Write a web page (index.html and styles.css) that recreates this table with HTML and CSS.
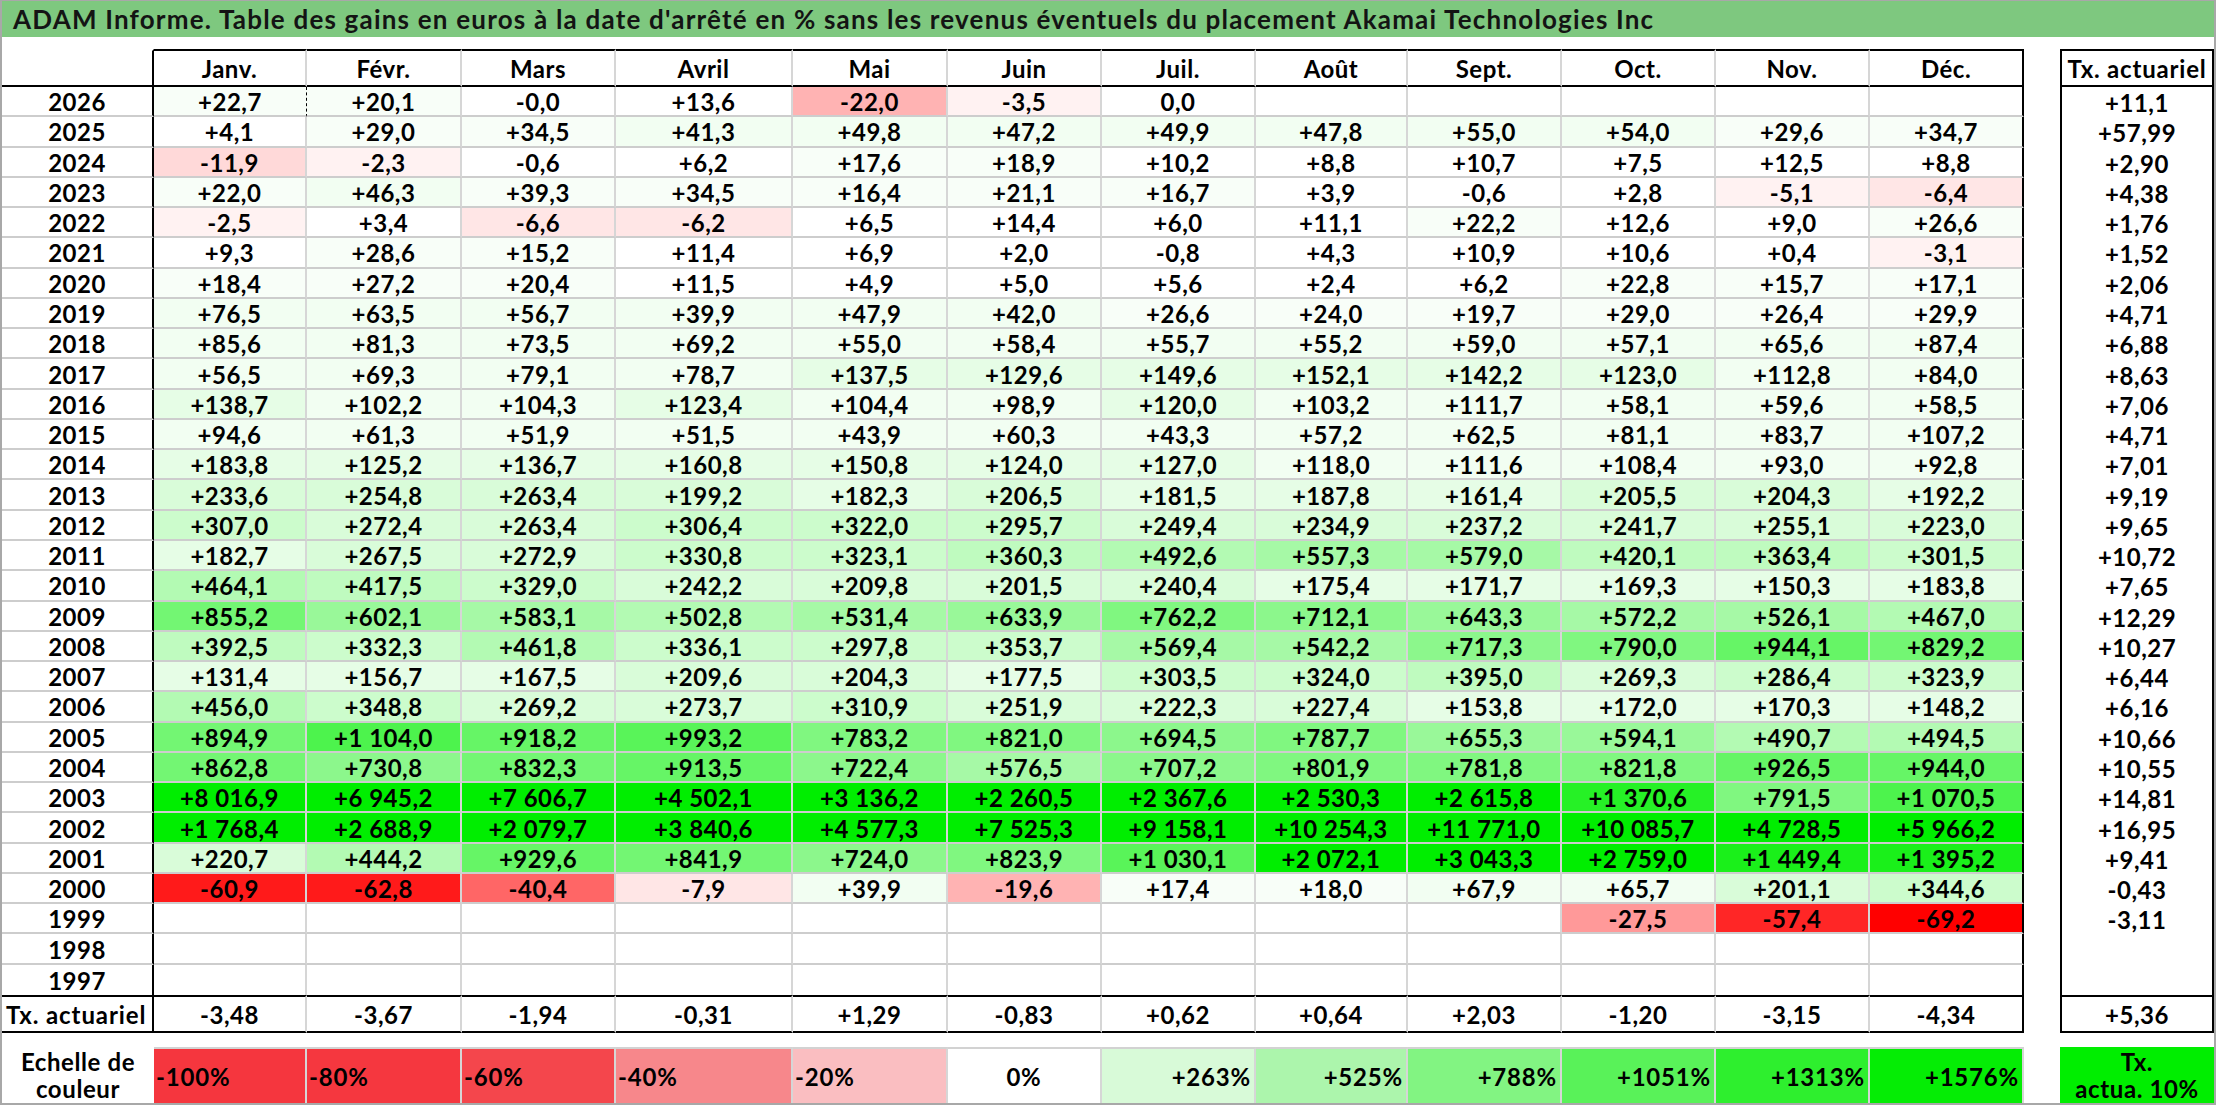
FILE: index.html
```html
<!DOCTYPE html>
<html lang="fr">
<head>
<meta charset="utf-8">
<title>ADAM Informe</title>
<link rel="stylesheet" href="styles.css">
</head>
<body>
<div class="sheet">
  <div class="title">ADAM Informe. Table des gains en euros à la date d'arrêté en % sans les revenus éventuels du placement Akamai Technologies Inc</div>
  <div class="tables">
    <div class="grid">
      <div class="y hd corner"></div>
      <div class="c hd">Janv.</div><div class="c hd">Févr.</div><div class="c hd">Mars</div><div class="c hd">Avril</div><div class="c hd">Mai</div><div class="c hd">Juin</div><div class="c hd">Juil.</div><div class="c hd">Août</div><div class="c hd">Sept.</div><div class="c hd">Oct.</div><div class="c hd">Nov.</div><div class="c hd e">Déc.</div>

      <div class="y">2026</div>
      <div class="c gh mq">+22,7</div><div class="c gh">+20,1</div><div class="c">-0,0</div><div class="c">+13,6</div><div class="c r6">-22,0</div><div class="c r1">-3,5</div><div class="c">0,0</div><div class="c"></div><div class="c"></div><div class="c"></div><div class="c"></div><div class="c e"></div>

      <div class="y">2025</div>
      <div class="c">+4,1</div><div class="c gh">+29,0</div><div class="c gh">+34,5</div><div class="c g1">+41,3</div><div class="c g1">+49,8</div><div class="c g1">+47,2</div><div class="c g1">+49,9</div><div class="c g1">+47,8</div><div class="c g1">+55,0</div><div class="c g1">+54,0</div><div class="c gh">+29,6</div><div class="c gh e">+34,7</div>

      <div class="y">2024</div>
      <div class="c r3">-11,9</div><div class="c r1">-2,3</div><div class="c">-0,6</div><div class="c">+6,2</div><div class="c gh">+17,6</div><div class="c gh">+18,9</div><div class="c">+10,2</div><div class="c">+8,8</div><div class="c">+10,7</div><div class="c">+7,5</div><div class="c">+12,5</div><div class="c e">+8,8</div>

      <div class="y">2023</div>
      <div class="c gh">+22,0</div><div class="c g1">+46,3</div><div class="c gh">+39,3</div><div class="c gh">+34,5</div><div class="c gh">+16,4</div><div class="c gh">+21,1</div><div class="c gh">+16,7</div><div class="c">+3,9</div><div class="c">-0,6</div><div class="c">+2,8</div><div class="c r1">-5,1</div><div class="c r2 e">-6,4</div>

      <div class="y">2022</div>
      <div class="c r1">-2,5</div><div class="c">+3,4</div><div class="c r2">-6,6</div><div class="c r2">-6,2</div><div class="c">+6,5</div><div class="c">+14,4</div><div class="c">+6,0</div><div class="c">+11,1</div><div class="c gh">+22,2</div><div class="c">+12,6</div><div class="c">+9,0</div><div class="c gh e">+26,6</div>

      <div class="y">2021</div>
      <div class="c">+9,3</div><div class="c gh">+28,6</div><div class="c gh">+15,2</div><div class="c">+11,4</div><div class="c">+6,9</div><div class="c">+2,0</div><div class="c">-0,8</div><div class="c">+4,3</div><div class="c">+10,9</div><div class="c">+10,6</div><div class="c">+0,4</div><div class="c r1 e">-3,1</div>

      <div class="y">2020</div>
      <div class="c gh">+18,4</div><div class="c gh">+27,2</div><div class="c gh">+20,4</div><div class="c">+11,5</div><div class="c">+4,9</div><div class="c">+5,0</div><div class="c">+5,6</div><div class="c">+2,4</div><div class="c">+6,2</div><div class="c gh">+22,8</div><div class="c gh">+15,7</div><div class="c gh e">+17,1</div>

      <div class="y">2019</div>
      <div class="c g1">+76,5</div><div class="c g1">+63,5</div><div class="c g1">+56,7</div><div class="c g1">+39,9</div><div class="c g1">+47,9</div><div class="c g1">+42,0</div><div class="c gh">+26,6</div><div class="c gh">+24,0</div><div class="c gh">+19,7</div><div class="c gh">+29,0</div><div class="c gh">+26,4</div><div class="c gh e">+29,9</div>

      <div class="y">2018</div>
      <div class="c g1">+85,6</div><div class="c g1">+81,3</div><div class="c g1">+73,5</div><div class="c g1">+69,2</div><div class="c g1">+55,0</div><div class="c g1">+58,4</div><div class="c g1">+55,7</div><div class="c g1">+55,2</div><div class="c g1">+59,0</div><div class="c g1">+57,1</div><div class="c g1">+65,6</div><div class="c g1 e">+87,4</div>

      <div class="y">2017</div>
      <div class="c g1">+56,5</div><div class="c g1">+69,3</div><div class="c g1">+79,1</div><div class="c g1">+78,7</div><div class="c g2">+137,5</div><div class="c g2">+129,6</div><div class="c g2">+149,6</div><div class="c g2">+152,1</div><div class="c g2">+142,2</div><div class="c g2">+123,0</div><div class="c g1">+112,8</div><div class="c g1 e">+84,0</div>

      <div class="y">2016</div>
      <div class="c g2">+138,7</div><div class="c g1">+102,2</div><div class="c g1">+104,3</div><div class="c g2">+123,4</div><div class="c g1">+104,4</div><div class="c g1">+98,9</div><div class="c g2">+120,0</div><div class="c g1">+103,2</div><div class="c g1">+111,7</div><div class="c g1">+58,1</div><div class="c g1">+59,6</div><div class="c g1 e">+58,5</div>

      <div class="y">2015</div>
      <div class="c g1">+94,6</div><div class="c g1">+61,3</div><div class="c g1">+51,9</div><div class="c g1">+51,5</div><div class="c g1">+43,9</div><div class="c g1">+60,3</div><div class="c g1">+43,3</div><div class="c g1">+57,2</div><div class="c g1">+62,5</div><div class="c g1">+81,1</div><div class="c g1">+83,7</div><div class="c g1 e">+107,2</div>

      <div class="y">2014</div>
      <div class="c g2">+183,8</div><div class="c g2">+125,2</div><div class="c g2">+136,7</div><div class="c g2">+160,8</div><div class="c g2">+150,8</div><div class="c g2">+124,0</div><div class="c g2">+127,0</div><div class="c g1">+118,0</div><div class="c g1">+111,6</div><div class="c g1">+108,4</div><div class="c g1">+93,0</div><div class="c g1 e">+92,8</div>

      <div class="y">2013</div>
      <div class="c g3">+233,6</div><div class="c g3">+254,8</div><div class="c g3">+263,4</div><div class="c g3">+199,2</div><div class="c g2">+182,3</div><div class="c g3">+206,5</div><div class="c g2">+181,5</div><div class="c g2">+187,8</div><div class="c g2">+161,4</div><div class="c g3">+205,5</div><div class="c g3">+204,3</div><div class="c g2 e">+192,2</div>

      <div class="y">2012</div>
      <div class="c g4">+307,0</div><div class="c g3">+272,4</div><div class="c g3">+263,4</div><div class="c g4">+306,4</div><div class="c g4">+322,0</div><div class="c g4">+295,7</div><div class="c g3">+249,4</div><div class="c g3">+234,9</div><div class="c g3">+237,2</div><div class="c g3">+241,7</div><div class="c g3">+255,1</div><div class="c g3 e">+223,0</div>

      <div class="y">2011</div>
      <div class="c g2">+182,7</div><div class="c g3">+267,5</div><div class="c g3">+272,9</div><div class="c g4">+330,8</div><div class="c g4">+323,1</div><div class="c g5">+360,3</div><div class="c g6">+492,6</div><div class="c g7">+557,3</div><div class="c g7">+579,0</div><div class="c g5">+420,1</div><div class="c g5">+363,4</div><div class="c g4 e">+301,5</div>

      <div class="y">2010</div>
      <div class="c g6">+464,1</div><div class="c g5">+417,5</div><div class="c g4">+329,0</div><div class="c g3">+242,2</div><div class="c g3">+209,8</div><div class="c g3">+201,5</div><div class="c g3">+240,4</div><div class="c g2">+175,4</div><div class="c g2">+171,7</div><div class="c g2">+169,3</div><div class="c g2">+150,3</div><div class="c g2 e">+183,8</div>

      <div class="y">2009</div>
      <div class="c g11">+855,2</div><div class="c g8">+602,1</div><div class="c g7">+583,1</div><div class="c g6">+502,8</div><div class="c g7">+531,4</div><div class="c g8">+633,9</div><div class="c g10">+762,2</div><div class="c g9">+712,1</div><div class="c g8">+643,3</div><div class="c g7">+572,2</div><div class="c g7">+526,1</div><div class="c g6 e">+467,0</div>

      <div class="y">2008</div>
      <div class="c g5">+392,5</div><div class="c g4">+332,3</div><div class="c g6">+461,8</div><div class="c g4">+336,1</div><div class="c g4">+297,8</div><div class="c g4">+353,7</div><div class="c g7">+569,4</div><div class="c g7">+542,2</div><div class="c g9">+717,3</div><div class="c g10">+790,0</div><div class="c g12">+944,1</div><div class="c g11 e">+829,2</div>

      <div class="y">2007</div>
      <div class="c g2">+131,4</div><div class="c g2">+156,7</div><div class="c g2">+167,5</div><div class="c g3">+209,6</div><div class="c g3">+204,3</div><div class="c g2">+177,5</div><div class="c g4">+303,5</div><div class="c g4">+324,0</div><div class="c g5">+395,0</div><div class="c g3">+269,3</div><div class="c g4">+286,4</div><div class="c g4 e">+323,9</div>

      <div class="y">2006</div>
      <div class="c g6">+456,0</div><div class="c g4">+348,8</div><div class="c g3">+269,2</div><div class="c g3">+273,7</div><div class="c g4">+310,9</div><div class="c g3">+251,9</div><div class="c g3">+222,3</div><div class="c g3">+227,4</div><div class="c g2">+153,8</div><div class="c g2">+172,0</div><div class="c g2">+170,3</div><div class="c g2 e">+148,2</div>

      <div class="y">2005</div>
      <div class="c g11">+894,9</div><div class="c g14">+1 104,0</div><div class="c g12">+918,2</div><div class="c g13">+993,2</div><div class="c g10">+783,2</div><div class="c g10">+821,0</div><div class="c g9">+694,5</div><div class="c g10">+787,7</div><div class="c g8">+655,3</div><div class="c g8">+594,1</div><div class="c g6">+490,7</div><div class="c g6 e">+494,5</div>

      <div class="y">2004</div>
      <div class="c g11">+862,8</div><div class="c g9">+730,8</div><div class="c g11">+832,3</div><div class="c g12">+913,5</div><div class="c g9">+722,4</div><div class="c g7">+576,5</div><div class="c g9">+707,2</div><div class="c g10">+801,9</div><div class="c g10">+781,8</div><div class="c g10">+821,8</div><div class="c g12">+926,5</div><div class="c g12 e">+944,0</div>

      <div class="y">2003</div>
      <div class="c g20">+8 016,9</div><div class="c g20">+6 945,2</div><div class="c g20">+7 606,7</div><div class="c g20">+4 502,1</div><div class="c g20">+3 136,2</div><div class="c g20">+2 260,5</div><div class="c g20">+2 367,6</div><div class="c g20">+2 530,3</div><div class="c g20">+2 615,8</div><div class="c g17">+1 370,6</div><div class="c g10">+791,5</div><div class="c g14 e">+1 070,5</div>

      <div class="y">2002</div>
      <div class="c g20">+1 768,4</div><div class="c g20">+2 688,9</div><div class="c g20">+2 079,7</div><div class="c g20">+3 840,6</div><div class="c g20">+4 577,3</div><div class="c g20">+7 525,3</div><div class="c g20">+9 158,1</div><div class="c g20">+10 254,3</div><div class="c g20">+11 771,0</div><div class="c g20">+10 085,7</div><div class="c g20">+4 728,5</div><div class="c g20 e">+5 966,2</div>

      <div class="y">2001</div>
      <div class="c g3">+220,7</div><div class="c g6">+444,2</div><div class="c g12">+929,6</div><div class="c g11">+841,9</div><div class="c g9">+724,0</div><div class="c g10">+823,9</div><div class="c g13">+1 030,1</div><div class="c g20">+2 072,1</div><div class="c g20">+3 043,3</div><div class="c g20">+2 759,0</div><div class="c g18">+1 449,4</div><div class="c g18 e">+1 395,2</div>

      <div class="y">2000</div>
      <div class="c r18">-60,9</div><div class="c r18">-62,8</div><div class="c r12">-40,4</div><div class="c r2">-7,9</div><div class="c g1">+39,9</div><div class="c r6">-19,6</div><div class="c gh">+17,4</div><div class="c gh">+18,0</div><div class="c g1">+67,9</div><div class="c g1">+65,7</div><div class="c g3">+201,1</div><div class="c g4 e">+344,6</div>

      <div class="y">1999</div>
      <div class="c"></div><div class="c"></div><div class="c"></div><div class="c"></div><div class="c"></div><div class="c"></div><div class="c"></div><div class="c"></div><div class="c"></div><div class="c r8">-27,5</div><div class="c r17">-57,4</div><div class="c r20 e">-69,2</div>

      <div class="y">1998</div>
      <div class="c"></div><div class="c"></div><div class="c"></div><div class="c"></div><div class="c"></div><div class="c"></div><div class="c"></div><div class="c"></div><div class="c"></div><div class="c"></div><div class="c"></div><div class="c e"></div>

      <div class="y nb">1997</div>
      <div class="c nb"></div><div class="c nb"></div><div class="c nb"></div><div class="c nb"></div><div class="c nb"></div><div class="c nb"></div><div class="c nb"></div><div class="c nb"></div><div class="c nb"></div><div class="c nb"></div><div class="c nb"></div><div class="c nb e"></div>

      <div class="y tx txlabel">Tx. actuariel</div>
      <div class="c tx">-3,48</div><div class="c tx">-3,67</div><div class="c tx">-1,94</div><div class="c tx">-0,31</div><div class="c tx">+1,29</div><div class="c tx">-0,83</div><div class="c tx">+0,62</div><div class="c tx">+0,64</div><div class="c tx">+2,03</div><div class="c tx">-1,20</div><div class="c tx">-3,15</div><div class="c tx e">-4,34</div>
    </div>

    <div class="side">
      <div class="s shd">Tx. actuariel</div>
      <div class="s">+11,1</div>
      <div class="s">+57,99</div>
      <div class="s">+2,90</div>
      <div class="s">+4,38</div>
      <div class="s">+1,76</div>
      <div class="s">+1,52</div>
      <div class="s">+2,06</div>
      <div class="s">+4,71</div>
      <div class="s">+6,88</div>
      <div class="s">+8,63</div>
      <div class="s">+7,06</div>
      <div class="s">+4,71</div>
      <div class="s">+7,01</div>
      <div class="s">+9,19</div>
      <div class="s">+9,65</div>
      <div class="s">+10,72</div>
      <div class="s">+7,65</div>
      <div class="s">+12,29</div>
      <div class="s">+10,27</div>
      <div class="s">+6,44</div>
      <div class="s">+6,16</div>
      <div class="s">+10,66</div>
      <div class="s">+10,55</div>
      <div class="s">+14,81</div>
      <div class="s">+16,95</div>
      <div class="s">+9,41</div>
      <div class="s">-0,43</div>
      <div class="s">-3,11</div>
      <div class="s"></div>
      <div class="s"></div>
      <div class="s stx">+5,36</div>
    </div>
  </div>

  <div class="legend">
    <div class="lgrid">
      <div class="llabel">Echelle de<br>couleur</div>
      <div class="l neg l100">-100%</div>
      <div class="l neg l80">-80%</div>
      <div class="l neg l60">-60%</div>
      <div class="l neg l40">-40%</div>
      <div class="l neg l20">-20%</div>
      <div class="l zero">0%</div>
      <div class="l pos p1">+263%</div>
      <div class="l pos p2">+525%</div>
      <div class="l pos p3">+788%</div>
      <div class="l pos p4">+1051%</div>
      <div class="l pos p5">+1313%</div>
      <div class="l pos p6">+1576%</div>
    </div>
    <div class="ltx">Tx.<br>actua. 10%</div>
  </div>
</div>
</body>
</html>
```

FILE: styles.css
```css
* {
  box-sizing: border-box;
}

html,
body {
  margin: 0;
  padding: 0;
  background: #ffffff;
}

body {
  font-family: "Lato", "Liberation Sans", sans-serif;
  font-weight: 700;
  color: #000000;
}

.sheet {
  width: 2216px;
  height: 1105px;
  border: 2px solid #a8a8a8;
  border-top-width: 1px;
  display: flex;
  flex-direction: column;
  overflow: hidden;
}

.title {
  height: 36px;
  flex: none;
  background: #7ec87f;
  color: #141414;
  font-size: 26px;
  letter-spacing: 1.2px;
  padding-left: 11px;
  display: flex;
  align-items: center;
  white-space: nowrap;
}

.tables {
  display: flex;
  gap: 36px;
  margin-top: 12px;
  flex: none;
}

.grid,
.lgrid {
  display: grid;
  grid-template-columns: 152px 153px 155px 154px 177px 155px 154px 154px 152px 154px 154px 154px 154px;
}

.grid {
  grid-template-rows: 38px repeat(30, 30.267px) 38px;
}

.c,
.y,
.s {
  display: flex;
  align-items: center;
  justify-content: center;
  font-size: 24px;
  letter-spacing: 0.5px;
  white-space: nowrap;
  padding-top: 1px;
}

.c {
  border-bottom: 2px solid #cdcdcd;
  border-right: 2px solid #d6d6d6;
}

.y {
  border-bottom: 2px solid #cdcdcd;
  border-right: 2px solid #000000;
}

.c.e {
  border-right: 2px solid #000000;
}

.hd {
  border-top: 2px solid #000000;
  border-bottom: 2px solid #000000;
}

.corner {
  border-top-color: transparent;
}

.nb {
  border-bottom: 0;
}

.tx {
  border-top: 2px solid #000000;
  border-bottom: 2px solid #000000;
}

.txlabel {
  letter-spacing: 0.9px;
  justify-content: flex-start;
  padding-left: 4px;
}

.mq {
  border-right: 1px dashed #000000;
}

/* Tx. actuariel side column */
.side {
  width: 154px;
  border: 2px solid #000000;
  display: grid;
  grid-template-rows: 36px repeat(30, 30.267px) 36px;
}

.shd {
  border-bottom: 2px solid #000000;
  letter-spacing: 0.8px;
}

.stx {
  border-top: 2px solid #000000;
}

/* heat-map fills */
.gh { background: #f8fef8; }
.g1 { background: rgb(242, 254, 242); }
.g2 { background: rgb(230, 253, 230); }
.g3 { background: rgb(217, 252, 217); }
.g4 { background: rgb(204, 252, 204); }
.g5 { background: rgb(191, 251, 191); }
.g6 { background: rgb(179, 250, 179); }
.g7 { background: rgb(166, 249, 166); }
.g8 { background: rgb(153, 248, 153); }
.g9 { background: rgb(140, 247, 140); }
.g10 { background: rgb(128, 247, 128); }
.g11 { background: rgb(115, 246, 115); }
.g12 { background: rgb(102, 245, 102); }
.g13 { background: rgb(89, 244, 89); }
.g14 { background: rgb(77, 243, 77); }
.g17 { background: rgb(38, 241, 38); }
.g18 { background: rgb(26, 240, 26); }
.g20 { background: rgb(0, 238, 0); }

.r1 { background: rgb(255, 242, 242); }
.r2 { background: rgb(255, 230, 230); }
.r3 { background: rgb(255, 217, 217); }
.r6 { background: rgb(255, 179, 179); }
.r8 { background: rgb(255, 153, 153); }
.r12 { background: rgb(255, 102, 102); }
.r17 { background: rgb(255, 38, 38); }
.r18 { background: rgb(255, 26, 26); }
.r20 { background: rgb(255, 0, 0); }

/* legend */
.legend {
  display: flex;
  gap: 36px;
  margin-top: 14px;
  height: 56px;
  flex: none;
}

.lgrid {
  height: 56px;
}

.llabel {
  font-size: 24px;
  letter-spacing: 0.6px;
  line-height: 27px;
  text-align: center;
  display: flex;
  align-items: center;
  justify-content: center;
}

.l {
  display: flex;
  align-items: center;
  font-size: 24px;
  letter-spacing: 0.8px;
  border-top: 2px solid #d2d2d2;
  border-right: 2px solid #d6d6d6;
  padding-top: 2px;
}

.neg {
  justify-content: flex-start;
  padding-left: 2px;
}

.zero {
  justify-content: center;
}

.pos {
  justify-content: flex-end;
  padding-right: 3px;
}

.l100 { background: #f5363e; }
.l80 { background: #f5373f; }
.l60 { background: #f4464c; }
.l40 { background: #f7878b; }
.l20 { background: #fabec1; }
.zero { background: #ffffff; }
.p1 { background: #d8fad8; }
.p2 { background: #acf5ac; }
.p3 { background: #82f482; }
.p4 { background: #59f259; }
.p5 { background: #2eef2e; }
.p6 { background: #05ed05; }

.ltx {
  width: 154px;
  background: #00ee00;
  font-size: 24px;
  letter-spacing: 0.6px;
  line-height: 27px;
  text-align: center;
  display: flex;
  align-items: center;
  justify-content: center;
}
```
